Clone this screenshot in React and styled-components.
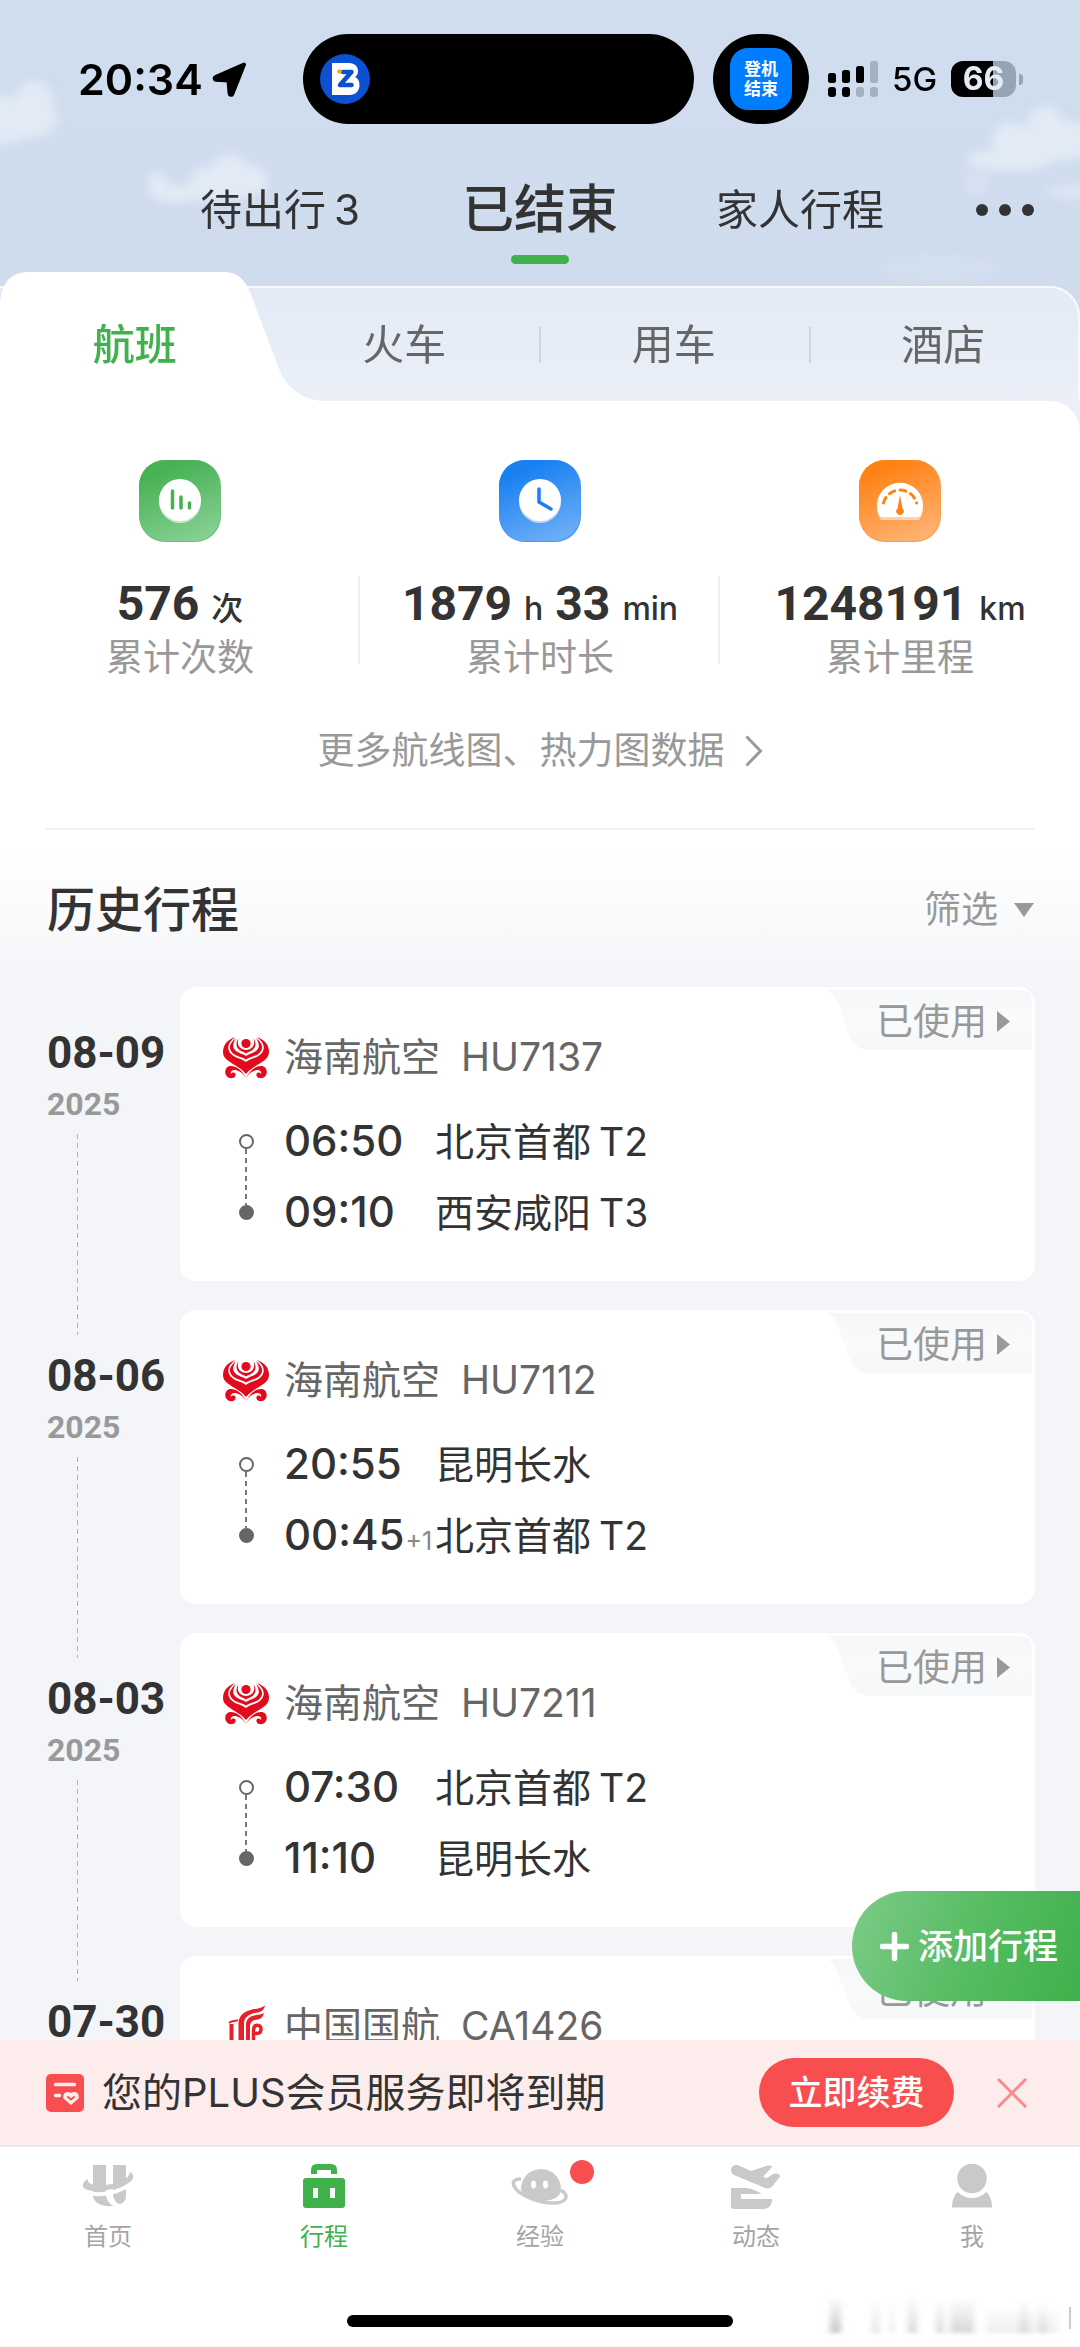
import React from "react";
import styled, { createGlobalStyle } from "styled-components";

const GlobalStyle = createGlobalStyle`
  *, *::before, *::after { box-sizing: border-box; }
  html, body { margin: 0; padding: 0; background: #fff; }
  body, button {
    font-family: Inter, "Noto Sans CJK SC", sans-serif;
    color: #333;
  }
  button {
    margin: 0;
    padding: 0;
    border: 0;
    background: none;
    cursor: pointer;
  }
  h2, p, ul, ol { margin: 0; padding: 0; font-weight: 400; }
  ul, ol { list-style: none; }
  svg { display: block; flex: none; }
`;

const Shell = styled.div`
  display: flex;
  flex-direction: column;
  height: 100vh;
  overflow: hidden;
  background: #f4f5f9;
`;

/* ---------- header ---------- */

const Header = styled.header`
  position: relative;
  padding-top: 34px;
  background: linear-gradient(#cfdeee, #cfdcee 60%, #d1dced);
`;

const Sky = styled.svg`
  position: absolute;
  inset: 0;
  width: 100%;
  height: 100%;
`;

const StatusBar = styled.div`
  position: relative;
  display: grid;
  grid-template-columns: 284px 391px 96px 1fr;
  column-gap: 19px;
  align-items: center;
  height: 90px;
  color: #000;
`;

const Clock = styled.div`
  display: flex;
  align-items: center;
  gap: 9px;
  padding-left: 78px;
  font-size: 43px;
  font-weight: 600;
  line-height: 56px;
`;

const Island = styled.div`
  display: flex;
  align-items: center;
  height: 90px;
  padding-left: 17px;
  border-radius: 45px;
  background: #000;
`;

const Activity = styled.div`
  display: flex;
  align-items: center;
  justify-content: center;
  height: 90px;
  border-radius: 48px;
  background: #000;
`;

const ActivityBadge = styled.span`
  width: 62px;
  height: 62px;
  padding: 11px 14px;
  border-radius: 18px;
  background: #007dff;
  color: #fff;
  font-size: 17px;
  font-weight: 700;
  line-height: 20px;
`;

const Signals = styled.div`
  display: flex;
  align-items: center;
  gap: 14px;
  font-size: 33px;
  font-weight: 500;
  line-height: 40px;
`;

const Battery = styled.span`
  position: relative;
  width: 65px;
  height: 36px;
  border-radius: 12px;
  background: linear-gradient(90deg, #000 65%, #97a4b3 65%);
  color: #e4ebf3;
  font-size: 32px;
  font-weight: 700;
  line-height: 36px;
  text-align: center;

  &::after {
    content: "";
    position: absolute;
    right: -7px;
    top: 13px;
    width: 4px;
    height: 11px;
    border-radius: 0 6px 6px 0;
    background: #97a4b3;
  }
`;

const TopTabs = styled.nav`
  position: relative;
  display: grid;
  grid-template-columns: 1fr 260px 260px 260px 1fr;
  height: 148px;
  padding-top: 54px;
`;

const TopTab = styled.button`
  grid-column-start: ${(p) => p.$column};
  display: flex;
  flex-direction: column;
  align-items: center;
  gap: 13px;
  height: 87px;
  font-size: ${(p) => (p.$active ? 52 : 42)}px;
  font-weight: ${(p) => (p.$active ? 500 : 400)};
  line-height: 64px;
  white-space: nowrap;

  &::after {
    content: "";
    width: 58px;
    height: 9px;
    border-radius: 5px;
    background: ${(p) => (p.$active ? "#40b14b" : "transparent")};
  }
`;

const Count = styled.span`
  margin-left: 8px;
`;

const MoreButton = styled.button`
  display: flex;
  align-items: center;
  justify-content: center;
  height: 64px;
`;

const Categories = styled.nav`
  position: relative;
  display: grid;
  grid-template-columns: repeat(4, 1fr);
  height: 115px;
  margin-top: 14px;
  border-top: 2px solid #f7f9fd;
  border-right: 2px solid #f7f9fd;
  border-radius: 0 30px 0 0;
  background: linear-gradient(#e4ebf6, #eaeff8);
`;

const HeaderBody = styled.div`
  display: flow-root;
`;

const Category = styled.button`
  position: relative;
  color: ${(p) => (p.$active ? "#40b14b" : "#666")};
  font-size: 42px;
  font-weight: ${(p) => (p.$active ? 500 : 400)};
  line-height: 60px;
  background: ${(p) =>
    p.$divided
      ? "linear-gradient(#cfd6e0, #cfd6e0) left center / 2px 36px no-repeat"
      : "none"};
`;

const ActiveShape = styled.svg`
  position: absolute;
  left: 0;
  bottom: 0;
  width: 120%;
  height: 129px;
`;

const CategoryLabel = styled.span`
  position: relative;
`;

/* ---------- scrolling content ---------- */

const Stage = styled.div`
  position: relative;
  flex: 1;
  min-height: 0;
`;

const Scroller = styled.main`
  height: 100%;
  overflow-y: auto;
  scrollbar-width: none;
  background: #f4f5f9;
`;

const PanelWrap = styled.div`
  background: #eaeff8;
`;

const Panel = styled.section`
  padding: 59px 0 0;
  border-radius: 0 30px 0 0;
  background: #fff;
`;

const Stats = styled.div`
  display: grid;
  grid-template-columns: repeat(3, 1fr);
`;

const Stat = styled.div`
  display: flex;
  flex-direction: column;
  gap: 34px;
  align-items: center;
`;

const StatBody = styled.div`
  align-self: stretch;
  text-align: center;
  white-space: nowrap;
  background: ${(p) =>
    p.$divided
      ? "linear-gradient(#f0f0f0, #f0f0f0) right top / 2px 88px no-repeat"
      : "none"};
`;

const Figure = styled.p`
  display: flex;
  justify-content: center;
  align-items: baseline;
  gap: 12px;
  height: 56px;
  line-height: 56px;
`;

const Digits = styled.strong`
  font-family: Roboto, sans-serif;
  font-size: 48px;
  font-weight: 700;
`;

const Unit = styled.span`
  font-size: 32px;
  font-weight: 500;
`;

const Caption = styled.p`
  color: #999;
  font-size: 37px;
  line-height: 52px;
`;

const MoreLink = styled.a`
  display: flex;
  justify-content: center;
  align-items: center;
  gap: 20px;
  margin-top: 37px;
  color: #999;
  font-size: 37px;
  line-height: 60px;
  text-decoration: none;
`;

const Divider = styled.hr`
  height: 2px;
  margin: 47px 46px 0;
  border: 0;
  background: #f0f0f0;
`;

const History = styled.section`
  background: linear-gradient(#fff 0, #fff 20px, #f4f5f9 157px);
`;

const HistoryHead = styled.div`
  display: flex;
  justify-content: space-between;
  align-items: center;
  height: 157px;
  padding: 2px 46px 0 47px;
`;

const Title = styled.h2`
  font-size: 48px;
  font-weight: 500;
  line-height: 64px;
`;

const FilterButton = styled.button`
  display: flex;
  align-items: center;
  gap: 16px;
  color: #999;
  font-size: 37px;
  line-height: 60px;
`;

const TripItem = styled.li`
  display: grid;
  grid-template-columns: 180px 1fr;
  padding: 0 45px 29px 0;
`;

const DateColumn = styled.div`
  display: flex;
  flex-direction: column;
  margin-bottom: -54px;
  padding: 44px 0 0 47px;
  font-family: Roboto, sans-serif;
  font-weight: 700;
`;

const Day = styled.time`
  font-size: 44px;
  line-height: 44px;
`;

const Year = styled.span`
  margin: 13px 0 14px;
  color: #999;
  font-size: 32px;
  line-height: 32px;
`;

const Thread = styled.span`
  flex: 1;
  width: 1px;
  margin-left: 30px;
  background: repeating-linear-gradient(#b0b2b8 0 5px, transparent 5px 9px);
`;

const Card = styled.article`
  position: relative;
  height: 294px;
  padding: 40px 43px 33px;
  border-radius: 16px;
  background: #fff;
`;

const StatusButton = styled.button`
  position: absolute;
  top: 3px;
  right: 2px;
  width: 206px;
  height: 60px;
  padding: 3px 0 0 49px;
  color: #999;
  font-size: 37px;
  line-height: 57px;
  white-space: nowrap;
`;

const StatusShape = styled.svg`
  position: absolute;
  inset: 0;
`;

const StatusText = styled.span`
  position: relative;
  display: flex;
  align-items: center;
  gap: 10px;
`;

const Flight = styled.div`
  display: flex;
  align-items: center;
  gap: 15px;
  height: 60px;
  color: #666;
  font-size: 39px;
  line-height: 60px;
`;

const FlightNo = styled.span`
  margin-left: 6px;
`;

const Route = styled.div`
  display: flex;
  gap: 15px;
  margin-top: 19px;
`;

const Rail = styled.div`
  display: flex;
  flex-direction: column;
  align-items: center;
  width: 46px;
  padding: 28px 0;
`;

const Stop = styled.span`
  width: 15px;
  height: 15px;
  border: 2px solid #666;
  border-radius: 50%;
  background: ${(p) => (p.$filled ? "#666" : "#fff")};
`;

const RailLine = styled.span`
  flex: 1;
  width: 2px;
  background: repeating-linear-gradient(#777 0 5px, transparent 5px 9px);
`;

const Legs = styled.div`
  flex: 1;
`;

const Leg = styled.p`
  display: grid;
  grid-template-columns: 151px 1fr;
  align-items: baseline;
  font-size: 39px;
  line-height: 70px;
  height: 71px;
  white-space: nowrap;
`;

const Time = styled.span`
  font-size: 42px;
  font-weight: 500;
`;

const NextDay = styled.sup`
  margin-left: 1px;
  color: #888;
  font-size: 25px;
  font-weight: 400;
  line-height: 0;
  vertical-align: baseline;
`;

const Terminal = styled.span`
  margin-left: 8px;
`;

const AddButton = styled.button`
  position: absolute;
  right: 0;
  bottom: 39px;
  display: flex;
  align-items: center;
  gap: 9px;
  height: 110px;
  padding: 0 22px 0 28px;
  border-radius: 55px 0 0 55px;
  background: linear-gradient(110deg, #7dcb88, #58bd64 50%, #3fb04b);
  color: #fff;
  font-size: 35px;
  font-weight: 500;
  line-height: 60px;
`;

/* ---------- bottom ---------- */

const Banner = styled.aside`
  display: flex;
  align-items: center;
  height: 105px;
  padding: 0 46px;
  background: #fdecec;
`;

const BannerText = styled.p`
  flex: 1;
  margin-left: 18px;
  font-size: 40px;
  line-height: 60px;
  white-space: nowrap;
`;

const RenewButton = styled.button`
  width: 195px;
  height: 69px;
  margin-right: 36px;
  border-radius: 35px;
  background: #f84e50;
  color: #fff;
  font-size: 34px;
  font-weight: 500;
  line-height: 60px;
`;

const CloseButton = styled.button`
  padding: 7px;
`;

const TabBar = styled.footer`
  position: relative;
  display: flex;
  flex-direction: column;
  justify-content: space-between;
  align-items: center;
  height: 202px;
  padding: 17px 0 20px;
  border-top: 2px solid #e9e9eb;
  background: #fff;
`;

const TabList = styled.nav`
  display: grid;
  grid-template-columns: repeat(5, 1fr);
  align-self: stretch;
`;

const Tab = styled.button`
  display: flex;
  flex-direction: column;
  align-items: center;
  gap: 14px;
  color: ${(p) => (p.$active ? "#40b14b" : "#a5a5a5")};
  font-size: 24px;
  line-height: 30px;
`;

const TabIcon = styled.span`
  position: relative;
  height: 44px;
`;

const Dot = styled.span`
  position: absolute;
  top: -4px;
  right: -25px;
  width: 24px;
  height: 24px;
  border-radius: 50%;
  background: #f84e50;
`;

const HomeIndicator = styled.span`
  width: 386px;
  height: 12px;
  border-radius: 6px;
  background: #000;
`;

const Smudge = styled.svg`
  position: absolute;
  right: 6px;
  bottom: 8px;
`;

/* ---------- drawings ---------- */

const Clouds = () => (
  <Sky viewBox="0 0 1080 401" preserveAspectRatio="none" aria-hidden="true">
    <defs>
      <filter id="soft" x="-30%" y="-30%" width="160%" height="160%">
        <feGaussianBlur stdDeviation="5" />
      </filter>
    </defs>
    <g fill="#e6eef7" filter="url(#soft)" opacity="0.8">
      <circle cx="34" cy="100" r="19" />
      <ellipse cx="28" cy="118" rx="30" ry="20" />
      <circle cx="0" cy="112" r="18" />
      <ellipse cx="6" cy="136" rx="18" ry="8" />
      <circle cx="157" cy="182" r="10" />
      <ellipse cx="176" cy="194" rx="26" ry="9" />
      <circle cx="230" cy="174" r="20" />
      <circle cx="204" cy="182" r="14" />
      <circle cx="254" cy="180" r="14" />
      <ellipse cx="216" cy="192" rx="44" ry="8" />
      <circle cx="1010" cy="140" r="18" />
      <circle cx="1045" cy="124" r="18" />
      <ellipse cx="1060" cy="140" rx="40" ry="20" />
      <ellipse cx="1010" cy="160" rx="44" ry="11" />
      <ellipse cx="1072" cy="192" rx="26" ry="5" />
      <ellipse cx="976" cy="184" rx="14" ry="10" opacity="0.5" />
      <ellipse cx="940" cy="268" rx="60" ry="14" opacity="0.25" />
    </g>
  </Sky>
);

const LocationArrow = () => (
  <svg width="35" height="35" viewBox="0 0 35 35" aria-hidden="true">
    <path
      d="M32 2.500 3.500 15a1.400 1.400 0 0 0 .4 2.700L16.500 18.500 17.600 31.500a1.400 1.400 0 0 0 2.700.4Z"
      fill="#000"
      stroke="#000"
      strokeWidth="4"
      strokeLinejoin="round"
    />
  </svg>
);

const BLogo = () => (
  <svg width="50" height="50" viewBox="0 0 50 50" aria-hidden="true">
    <circle cx="25" cy="25" r="25" fill="#0d50d2" />
    <path
      d="M12 9h17c6 0 9 4 9 8 0 3-1 4.500-3 6 3 1.500 4.500 4 4.500 8 0 6-4 10-10 10H12Z"
      fill="#fff"
    />
    <path
      d="M23 18h8.500L20 31h11.500"
      fill="none"
      stroke="#0d50d2"
      strokeWidth="4.500"
      strokeLinejoin="round"
      strokeLinecap="round"
    />
    <circle cx="19.500" cy="17.500" r="2.200" fill="#f5a623" />
  </svg>
);

const SignalBars = () => (
  <svg width="50" height="36" viewBox="0 0 50 36" aria-hidden="true">
    <g fill="#000">
      <rect x="0" y="12" width="8" height="10" rx="2.500" />
      <rect x="14" y="9" width="8" height="13" rx="2.500" />
      <rect x="28" y="5" width="8" height="17" rx="2.500" />
      <rect x="0" y="26" width="8" height="10" rx="3" />
      <rect x="14" y="26" width="8" height="10" rx="3" />
    </g>
    <g fill="#a3b0bf">
      <rect x="42" y="0" width="8" height="22" rx="2.500" />
      <rect x="28" y="26" width="8" height="10" rx="3" />
      <rect x="42" y="26" width="8" height="10" rx="3" />
    </g>
  </svg>
);

const MoreDots = () => (
  <svg width="58" height="12" viewBox="0 0 58 12" fill="#333" aria-hidden="true">
    <circle cx="6" cy="6" r="6" />
    <circle cx="29" cy="6" r="6" />
    <circle cx="52" cy="6" r="6" />
  </svg>
);

const tileColors = {
  green: ["#47b154", "#86d093"],
  blue: ["#1880f0", "#6eaef7"],
  orange: ["#ff8216", "#ffb273"],
};

const StatIcon = ({ tone, children }) => (
  <svg width="82" height="82" viewBox="0 0 82 82" aria-hidden="true">
    <defs>
      <linearGradient id={`tile-${tone}`} x1="0.3" y1="0" x2="0.7" y2="1">
        <stop offset="0.1" stopColor={tileColors[tone][0]} />
        <stop offset="1" stopColor={tileColors[tone][1]} />
      </linearGradient>
    </defs>
    <rect width="82" height="82" rx="26" fill={tileColors[tone][0]} opacity="0.8" />
    <rect width="81" height="81" rx="26" fill={`url(#tile-${tone})`} />
    {children}
  </svg>
);

const CountIcon = () => (
  <StatIcon tone="green">
    <circle cx="41" cy="42" r="21" fill="#fff" opacity="0.6" />
    <circle cx="41" cy="40" r="21" fill="#fff" />
    <path
      d="M33.500 31v17M42 37v11M50.500 43v5"
      stroke="#47b154"
      strokeWidth="3.500"
      strokeLinecap="round"
    />
  </StatIcon>
);

const ClockIcon = () => (
  <StatIcon tone="blue">
    <circle cx="41" cy="42" r="21" fill="#fff" opacity="0.6" />
    <circle cx="41" cy="40" r="21" fill="#fff" />
    <path
      d="M40 29v13l12 7"
      fill="none"
      stroke="#1880f0"
      strokeWidth="3.500"
      strokeLinecap="round"
      strokeLinejoin="round"
    />
  </StatIcon>
);

const GaugeIcon = () => (
  <StatIcon tone="orange">
    <path d="M22 60a23 23 0 1 1 38 0Z" fill="#fff" opacity="0.5" />
    <path d="M21 57a23 23 0 1 1 40 0Z" fill="#fff" />
    <path
      d="M24.500 43a17 17 0 0 1 33 0"
      fill="none"
      stroke="#ff8216"
      strokeWidth="3"
      strokeLinecap="round"
      strokeDasharray="6 5.200"
    />
    <path d="M41 35 43.500 48.500a3.700 3.700 0 1 1-5 0Z" fill="#ff8216" />
  </StatIcon>
);

const HainanLogo = () => (
  <svg width="46" height="43" viewBox="0 0 46 43" fill="#e20a1c" role="img" aria-label="海南航空">
    <circle cx="23" cy="7.500" r="4.600" />
    <path d="M12 1C4 4 0 9 0 16c0 10 15 12 23 22 8-10 23-12 23-22C46 9 42 4 34 1c6 5 8 9 6 14-3 7-12 7-17 11C18 22 9 22 6 15 4 10 6 6 12 1Z" />
    <path d="M13 2C7 7 5.500 11 8 15c3 5.500 11 5.500 15 8.500 4-3 12-3 15-8.500 2.500-4 1-8-5-13 3 5 4 9 1 12-3 3.500-8 3.500-11 6-3-2.500-8-2.500-11-6-3-3-2-7 1-12Z" />
    <path d="M15.500 2C12.500 7 13 10.500 16 13.500c2 2 5 2.500 7 4 2-1.500 5-2 7-4 3-3 3.500-6.500.5-11.500 1.500 5 .5 8-2 10-3 2.500-8 2.500-11 0-2.500-2-3.500-5-2-10Z" />
    <path d="M23 42C20 35.500 14 30 8 30 3.500 30 1.500 34 2.500 38c1.500 5 8.500 5.500 9.800 2 1-2.500-.6-4-2.500-3.500-1 .3-1.500.8-1.800 1.500C7 36 9 33.500 12 34c4.500.8 8 3 11 8Z" />
    <path d="M23 42c3-6.500 9-12 15-12 4.500 0 6.500 4 5.500 8-1.500 5-8.500 5.500-9.800 2-1-2.500.6-4 2.500-3.500 1 .3 1.500.8 1.800 1.500C39 36 37 33.500 34 34c-4.500.8-8 3-11 8Z" />
  </svg>
);

const AirChinaLogo = () => (
  <svg width="46" height="43" viewBox="0 0 46 43" fill="#e8202a" role="img" aria-label="中国国航">
    <path d="M15.500 42V18C16 9 23 6 29 4.500c5-1 9-1 13-4-1 4-3 6-7 7-7 1-13 3-14 10v24.500Z" />
    <path d="M23 42V20c0-7 5-9 10-10 3-.5 5 0 8-2-1 4-3 6-6 6.500-4 .5-7 1.500-8 5.500v22Z" />
    <g fill="none" stroke="#e8202a">
      <path d="M30.500 42V26c0-8 8-7 7.500-1.500-.3 4-4 5-6 3" strokeWidth="3.500" />
      <path d="M8.500 19v16c0 3 2 4 5 4" strokeWidth="4" />
      <path d="M6 18c3-3 6-1 9-3" strokeWidth="2" />
    </g>
  </svg>
);

const MemberIcon = () => (
  <svg width="38" height="38" viewBox="0 0 38 38" aria-hidden="true">
    <rect width="38" height="38" rx="5" fill="#f84e50" />
    <path d="M9.500 10.500h19M9.500 21.500h4" stroke="#fdecec" strokeWidth="3.500" strokeLinecap="round" />
    <path d="M25 31 17.500 24.500c-1.500-5 3-8 7.500-5.500 4.500-2.500 9 .5 7.500 5.500Z" fill="#fdecec" />
    <path d="m22 23 3 2.500 3-2.500" fill="none" stroke="#f84e50" strokeWidth="2" strokeLinecap="round" />
  </svg>
);

const HomeIcon = () => (
  <svg width="52" height="44" viewBox="0 0 52 44" aria-hidden="true">
    <path d="M11 1h13v28c0 3 0 8 7 13C20 43 11 39 11 31Z" fill="#c9c9c9" />
    <path d="M31 1h13v30c0 5-2 8-6 9-5-1-7-6-7-11Z" fill="#c9c9c9" />
    <path d="M3 27C15 34 38 29 51 18" fill="none" stroke="#fff" strokeWidth="4" />
    <path d="M6 15C-2 19-2 27 14 27c16 0 40-7 37-16-.5-2-2-2.500-4-2.500 2 4-7 10-20 12-12 2-23 0-21-5.500Z" fill="#c9c9c9" />
  </svg>
);

const TripIcon = () => (
  <svg width="42" height="44" viewBox="0 0 42 44" aria-hidden="true">
    <rect y="14" width="42" height="30" rx="3" fill="#40b14b" />
    <path d="M11 10V6q0-3 3-3h14q3 0 3 3v4" fill="none" stroke="#40b14b" strokeWidth="6" />
    <path d="M10 24h5v10h-5zM27 24h5v10h-5z" fill="#fff" />
  </svg>
);

const PlanetIcon = () => (
  <svg width="58" height="44" viewBox="0 0 58 44" aria-hidden="true">
    <path d="M10 25a20 20 0 1 1 40 0c0 8-8 12-20 12S10 30 10 25Z" fill="#c9c9c9" />
    <path
      d="M10 15C4 14.500 1 18 3 22c5 10 27 18 42 17 10-1 14-7 5-13"
      fill="none"
      stroke="#c9c9c9"
      strokeWidth="3.500"
    />
    <ellipse cx="22.500" cy="20.500" rx="2.500" ry="4" fill="#fff" />
    <ellipse cx="34.500" cy="20.500" rx="2.500" ry="4" fill="#fff" />
    <path d="m50 29-4 6h7Z" fill="#fff" />
  </svg>
);

const FeedIcon = () => (
  <svg width="52" height="46" viewBox="0 0 52 46" fill="#c9c9c9" aria-hidden="true">
    <path d="M4 1.500c3-1 5 0 7 1l10 4.500L38 1.500c3-.5 5 1 3 2.500L33 13l4 1 6-4c3-1 7-1 7 2.500L43 21.500c-2 2.500-5 3.500-8 2.500L4 11C0 8.500 0 3 4 1.500Z" />
    <path d="M1 24h14c6 0 12 3 17 6H11v5h31c0 6-3 10-9 10H4q-3 0-3-3Z" />
    <path d="M11 30h5v5h-5z" fill="#fff" />
    <path d="M18 30h14l10 1v4H18z" fill="#fff" />
  </svg>
);

const UserIcon = () => (
  <svg width="40" height="44" viewBox="0 0 40 44" fill="#c9c9c9" aria-hidden="true">
    <circle cx="20" cy="14.500" r="14.800" />
    <path d="M6 28c7 8 21 8 28 0 4 3 6 9 6 15.500H0C0 37 2 31 6 28Z" />
  </svg>
);

const SmudgeBars = () => (
  <Smudge width="260" height="44" viewBox="0 0 260 44" aria-hidden="true">
    <defs>
      <filter id="smudge" x="-5%" y="-10%" width="110%" height="120%">
        <feGaussianBlur stdDeviation="3 2" />
      </filter>
      <linearGradient id="fade" x1="0" y1="0" x2="0" y2="1">
        <stop offset="0" stopColor="#bbb" stopOpacity="0.1" />
        <stop offset="1" stopColor="#aaa" stopOpacity="0.7" />
      </linearGradient>
    </defs>
    <g fill="url(#fade)" filter="url(#smudge)">
      <rect x="16" y="4" width="11" height="34" />
      <rect x="58" y="6" width="7" height="32" opacity="0.5" />
      <rect x="76" y="6" width="4" height="32" opacity="0.4" />
      <rect x="94" y="4" width="9" height="34" opacity="0.7" />
      <rect x="122" y="8" width="8" height="30" opacity="0.7" />
      <rect x="136" y="6" width="24" height="32" opacity="0.7" />
      <rect x="172" y="14" width="72" height="24" opacity="0.3" />
      <rect x="206" y="4" width="8" height="34" opacity="0.5" />
      <rect x="226" y="8" width="6" height="30" opacity="0.5" />
    </g>
    <path d="M256 12v22" stroke="#ccc" strokeWidth="2" />
  </Smudge>
);

/* ---------- data ---------- */

const stats = [
  { icon: CountIcon, parts: [["576", "次"]], caption: "累计次数" },
  { icon: ClockIcon, parts: [["1879", "h"], ["33", "min"]], caption: "累计时长" },
  { icon: GaugeIcon, parts: [["1248191", "km"]], caption: "累计里程" },
];

const trips = [
  {
    day: "08-09",
    year: "2025",
    airline: "海南航空",
    logo: HainanLogo,
    flight: "HU7137",
    legs: [
      { time: "06:50", place: "北京首都", terminal: "T2" },
      { time: "09:10", place: "西安咸阳", terminal: "T3" },
    ],
  },
  {
    day: "08-06",
    year: "2025",
    airline: "海南航空",
    logo: HainanLogo,
    flight: "HU7112",
    legs: [
      { time: "20:55", place: "昆明长水" },
      { time: "00:45", nextDay: "+1", place: "北京首都", terminal: "T2" },
    ],
  },
  {
    day: "08-03",
    year: "2025",
    airline: "海南航空",
    logo: HainanLogo,
    flight: "HU7211",
    legs: [
      { time: "07:30", place: "北京首都", terminal: "T2" },
      { time: "11:10", place: "昆明长水" },
    ],
  },
  { day: "07-30", airline: "中国国航", logo: AirChinaLogo, flight: "CA1426", legs: [] },
];

const tabs = [
  { label: "首页", icon: HomeIcon },
  { label: "行程", icon: TripIcon, active: true },
  { label: "经验", icon: PlanetIcon, dot: true },
  { label: "动态", icon: FeedIcon },
  { label: "我", icon: UserIcon },
];

const Trip = ({ trip }) => {
  const Logo = trip.logo;
  return (
    <TripItem>
      <DateColumn>
        <Day dateTime={trip.day}>{trip.day}</Day>
        {trip.year && <Year>{trip.year}</Year>}
        {trip.year && <Thread />}
      </DateColumn>
      <Card>
        <StatusButton type="button">
          <StatusShape width="206" height="60" viewBox="0 0 206 60" aria-hidden="true">
            <defs>
              <linearGradient id={`used-${trip.day}`} x1="0" y1="0" x2="0" y2="1">
                <stop offset="0" stopColor="#f6f7f9" />
                <stop offset="0.5" stopColor="#f9fafb" />
                <stop offset="1" stopColor="#f5f7f8" />
              </linearGradient>
            </defs>
            <path
              d="M0 0H192Q205 0 205 13V60H44C32 60 26 54 22 44L11 14Q7 3 0 0Z"
              fill={`url(#used-${trip.day})`}
            />
          </StatusShape>
          <StatusText>
            已使用
            <svg width="13" height="21" viewBox="0 0 13 21" aria-hidden="true">
              <path d="M0 0 13 10.500 0 21Z" fill="#999" />
            </svg>
          </StatusText>
        </StatusButton>
        <Flight>
          <Logo />
          <span>{trip.airline}</span>
          <FlightNo>{trip.flight}</FlightNo>
        </Flight>
        {trip.legs.length > 0 && (
          <Route>
            <Rail>
              <Stop />
              <RailLine />
              <Stop $filled />
            </Rail>
            <Legs>
              {trip.legs.map((leg) => (
                <Leg key={leg.time}>
                  <span>
                    <Time>{leg.time}</Time>
                    {leg.nextDay && <NextDay>{leg.nextDay}</NextDay>}
                  </span>
                  <span>
                    {leg.place}
                    {leg.terminal && <Terminal>{leg.terminal}</Terminal>}
                  </span>
                </Leg>
              ))}
            </Legs>
          </Route>
        )}
      </Card>
    </TripItem>
  );
};

export default function App() {
  return (
    <Shell>
      <GlobalStyle />
      <Header>
        <Clouds />
        <StatusBar>
          <Clock>
            20:34
            <LocationArrow />
          </Clock>
          <Island>
            <BLogo />
          </Island>
          <Activity>
            <ActivityBadge>登机结束</ActivityBadge>
          </Activity>
          <Signals>
            <SignalBars />
            <span>5G</span>
            <Battery>66</Battery>
          </Signals>
        </StatusBar>
        <TopTabs>
          <TopTab type="button" $column={2}>
            <span>
              待出行<Count>3</Count>
            </span>
          </TopTab>
          <TopTab type="button" $column={3} $active>
            已结束
          </TopTab>
          <TopTab type="button" $column={4}>
            家人行程
          </TopTab>
          <MoreButton type="button" aria-label="更多">
            <MoreDots />
          </MoreButton>
        </TopTabs>
        <HeaderBody>
          <Categories>
            <Category type="button" $active>
              <ActiveShape viewBox="0 0 325 129" preserveAspectRatio="none" aria-hidden="true">
                <path
                  d="M0 129V30Q3 0 28 0H225C240 0 247 9 252 22L281 98C288 116 305 128 325 129Z"
                  fill="#fff"
                />
              </ActiveShape>
              <CategoryLabel>航班</CategoryLabel>
            </Category>
            <Category type="button">火车</Category>
            <Category type="button" $divided>
              用车
            </Category>
            <Category type="button" $divided>
              酒店
            </Category>
          </Categories>
        </HeaderBody>
      </Header>

      <Stage>
        <Scroller>
          <PanelWrap>
            <Panel>
              <Stats>
                {stats.map(({ icon: Icon, parts, caption }, i) => (
                  <Stat key={caption}>
                    <Icon />
                    <StatBody $divided={i < 2}>
                      <Figure>
                        {parts.map(([value, unit]) => (
                          <React.Fragment key={unit}>
                            <Digits>{value}</Digits>
                            <Unit>{unit}</Unit>
                          </React.Fragment>
                        ))}
                      </Figure>
                      <Caption>{caption}</Caption>
                    </StatBody>
                  </Stat>
                ))}
              </Stats>
              <MoreLink href="#routes">
                更多航线图、热力图数据
                <svg width="18" height="32" viewBox="0 0 18 32" aria-hidden="true">
                  <path d="m1.500 1.500 14 14.500-14 14.500" fill="none" stroke="#999" strokeWidth="3" />
                </svg>
              </MoreLink>
              <Divider />
            </Panel>
          </PanelWrap>
          <History>
            <HistoryHead>
              <Title>历史行程</Title>
              <FilterButton type="button">
                筛选
                <svg width="20" height="14" viewBox="0 0 20 14" aria-hidden="true">
                  <path d="M0 0H20L10 14Z" fill="#999" />
                </svg>
              </FilterButton>
            </HistoryHead>
            <ol>
              {trips.map((trip) => (
                <Trip key={trip.day} trip={trip} />
              ))}
            </ol>
          </History>
        </Scroller>
        <AddButton type="button">
          <svg width="29" height="29" viewBox="0 0 29 29" aria-hidden="true">
            <path d="M14.500 2.500v24M2.500 14.500h24" stroke="#fff" strokeWidth="5.500" strokeLinecap="round" />
          </svg>
          添加行程
        </AddButton>
      </Stage>

      <Banner>
        <MemberIcon />
        <BannerText>您的PLUS会员服务即将到期</BannerText>
        <RenewButton type="button">立即续费</RenewButton>
        <CloseButton type="button" aria-label="关闭">
          <svg width="30" height="30" viewBox="0 0 30 30" aria-hidden="true">
            <path d="m1 1 28 28M29 1 1 29" stroke="#f9898a" strokeWidth="3" />
          </svg>
        </CloseButton>
      </Banner>

      <TabBar>
        <TabList>
          {tabs.map(({ label, icon: Icon, active, dot }) => (
            <Tab key={label} type="button" $active={active}>
              <TabIcon>
                <Icon />
                {dot && <Dot />}
              </TabIcon>
              {label}
            </Tab>
          ))}
        </TabList>
        <HomeIndicator />
        <SmudgeBars />
      </TabBar>
    </Shell>
  );
}
